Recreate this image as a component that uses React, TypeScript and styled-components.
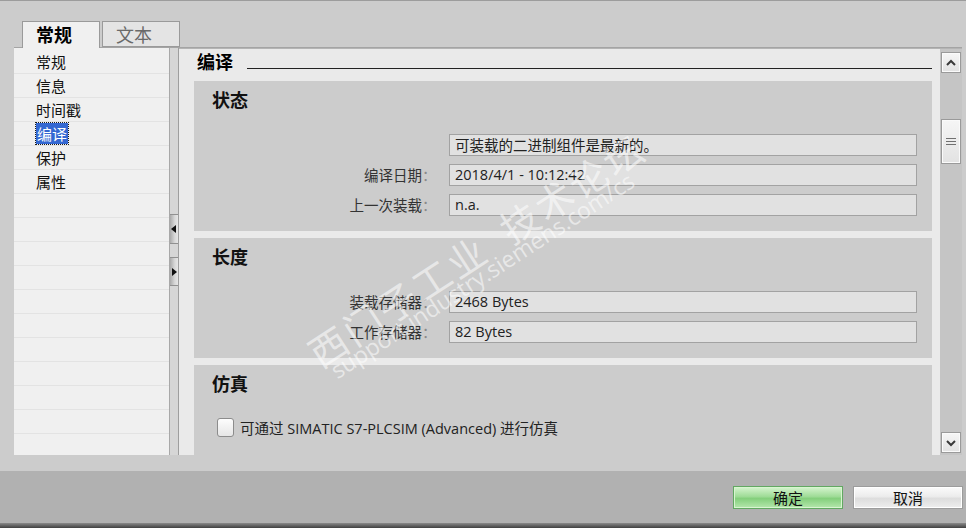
import React from "react";
import styled, { createGlobalStyle } from "styled-components";

const GlobalStyle = createGlobalStyle`
  html, body { margin: 0; padding: 0; background: #cccccc; }
  body { font-family: "Open Sans", "Noto Sans CJK SC", sans-serif; }
  * { box-sizing: border-box; }
`;

const CJK = `"Noto Sans CJK SC", "Open Sans", sans-serif`;
const LATIN = `"Open Sans", "Noto Sans CJK SC", sans-serif`;

const Root = styled.div`
  position: relative;
  width: 966px;
  height: 528px;
  overflow: hidden;
  background: #cccccc;
  border-top: 1px solid #9c9c9c;
  display: flex;
  flex-direction: column;
  font-family: ${LATIN};
`;

const TabRow = styled.div`
  display: flex;
  gap: 2px;
  padding: 20px 0 0 22px;
  height: 46px;
  flex: none;
`;

const Tab = styled.div<{ $active?: boolean }>`
  position: relative;
  z-index: 1;
  width: 78px;
  height: ${(p) => (p.$active ? "27px" : "26px")};
  margin-bottom: ${(p) => (p.$active ? "-1px" : "0")};
  border: 1px solid #9a9a9a;
  border-bottom: ${(p) => (p.$active ? "none" : "1px solid #9a9a9a")};
  background: ${(p) => (p.$active ? "#f0f0f0" : "#e4e4e4")};
  color: ${(p) => (p.$active ? "#000" : "#6a6a6a")};
  font-family: ${CJK};
  font-size: 18px;
  font-weight: ${(p) => (p.$active ? 700 : 400)};
  line-height: 25px;
  padding-left: 13px;
`;

const Body = styled.div`
  display: flex;
  height: 408px;
  margin: 0 4px 0 14px;
  border-top: 1px solid #a4a4a4;
  flex: none;
`;

const List = styled.div`
  width: 155px;
  background: #f0f0f0;
  padding-top: 2px;
  display: flex;
  flex-direction: column;
  overflow: hidden;
`;

const Row = styled.div`
  height: 24px;
  flex: none;
  border-bottom: 1px solid #e3e3e3;
  padding-left: 22px;
  display: flex;
  align-items: center;
  font-family: ${CJK};
  font-size: 15px;
  color: #111;
`;

const Selected = styled.span`
  background: #3468d2;
  color: #fff;
  outline: 1px dotted #1a1a1a;
  outline-offset: 0;
  padding: 0 1px;
  line-height: 21px;
`;

const Splitter = styled.div`
  width: 10px;
  background: #d6d6d6;
  border-left: 1px solid #a8a8a8;
  border-right: 1px solid #9e9e9e;
  display: flex;
  flex-direction: column;
  gap: 13px;
  padding-top: 166px;
`;

const SplitBtn = styled.div<{ $h: number }>`
  height: ${(p) => p.$h}px;
  background: linear-gradient(90deg, #a9a9a9, #d8d8d8 60%, #e6e6e6);
  border-top: 1px solid #909090;
  border-bottom: 1px solid #909090;
  display: flex;
  align-items: center;
  justify-content: center;
`;

const Content = styled.div`
  flex: 1;
  display: flex;
  background: #eaeaea;
  border-top: 1px solid #b4b4b4;
  min-width: 0;
  overflow: hidden;
`;

const ScrollArea = styled.div`
  flex: 1;
  padding: 0 8px 0 15px;
  display: flex;
  flex-direction: column;
  gap: 7px;
`;

const Header = styled.div`
  height: 25px;
  display: flex;
  align-items: flex-start;
  flex: none;
`;

const HeaderTitle = styled.div`
  font-family: ${CJK};
  font-size: 18px;
  font-weight: 700;
  line-height: 25px;
  padding-left: 3px;
  color: #000;
`;

const Rule = styled.div`
  flex: 1;
  height: 1px;
  background: #222;
  margin: 19px 0 0 14px;
`;

const Section = styled.div`
  background: #cccccc;
  padding: 7px 15px 15px 18px;
  flex: none;
`;

const SectionTitle = styled.div`
  font-family: ${CJK};
  font-size: 18px;
  font-weight: 700;
  line-height: 22px;
  color: #111;
`;

const Fields = styled.div`
  margin-top: 24px;
  display: grid;
  grid-template-columns: 1fr 468px;
  column-gap: 13px;
  row-gap: 8px;
`;

const Label = styled.div`
  text-align: right;
  font-family: ${CJK};
  font-size: 14.5px;
  line-height: 22px;
  color: #333;
  white-space: nowrap;
`;

const Colon = styled.span`
  display: inline-block;
  width: 14px;
  text-align: center;
  color: #8a8a8a;
`;

const Field = styled.div<{ $cjk?: boolean }>`
  height: 22px;
  border: 1px solid #a2a2a2;
  background: #e1e1e1;
  padding-left: 5px;
  font-family: ${(p) => (p.$cjk ? CJK : LATIN)};
  font-size: 14.5px;
  line-height: 20px;
  color: #222;
  white-space: nowrap;
`;

const CheckRow = styled.label`
  margin-top: 24px;
  margin-left: 5px;
  display: flex;
  align-items: center;
  gap: 6px;
  height: 19px;
  font-family: ${LATIN};
  font-size: 14.5px;
  color: #222;
`;

const CheckBox = styled.span`
  width: 17px;
  height: 19px;
  border: 1px solid #8c8c8c;
  border-radius: 3px;
  background: linear-gradient(#fdfdfd, #e6e6e6);
  flex: none;
`;

const Cjk = styled.span`
  font-family: ${CJK};
  font-size: 14.5px;
`;

const ScrollBar = styled.div`
  width: 22px;
  background: #c5c5c5;
  padding: 2px 1px;
  display: flex;
  flex-direction: column;
`;

const ScrollBtn = styled.div<{ $h: number }>`
  height: ${(p) => p.$h}px;
  flex: none;
  border: 1px solid #9a9a9a;
  box-shadow: inset 0 0 0 1px #fafafa;
  background: linear-gradient(#f6f6f6, #e2e2e2);
  display: flex;
  align-items: center;
  justify-content: center;
`;

const Thumb = styled(ScrollBtn)`
  margin-top: 46px;
`;

const Spacer = styled.div`
  flex: 1;
`;

const Footer = styled.div`
  margin-top: 16px;
  height: 52px;
  flex: none;
  background: #b1b1b1;
  display: flex;
  justify-content: flex-end;
  align-items: flex-start;
  gap: 10px;
  padding: 15px 3px 0 0;
`;

const Button = styled.div<{ $primary?: boolean }>`
  width: 110px;
  height: 23px;
  border: 1px solid ${(p) => (p.$primary ? "#62a862" : "#9c9c9c")};
  box-shadow: inset 0 0 0 1px ${(p) => (p.$primary ? "#d8f5d0" : "#ffffff")};
  background: ${(p) =>
    p.$primary
      ? "linear-gradient(#d6f4cf, #9fdc97 45%, #84cf7c 55%, #b5e7ad)"
      : "linear-gradient(#fbfbfb, #ececec 45%, #dddddd 55%, #eeeeee)"};
  font-family: ${CJK};
  font-size: 15px;
  line-height: 21px;
  text-align: center;
  color: #111;
`;

const BottomBar = styled.div`
  height: 5px;
  flex: none;
  background: linear-gradient(#8a8a8a, #404040);
`;

const Watermark = styled.div<{ $size: number }>`
  position: absolute;
  transform: translate(-50%, -50%) rotate(-33deg);
  white-space: nowrap;
  color: rgba(255, 255, 255, 0.55);
  font-size: ${(p) => p.$size}px;
  pointer-events: none;
  z-index: 5;
`;

const WmCjk = styled(Watermark)`
  font-family: ${CJK};
  letter-spacing: 3px;
`;

const WmUrl = styled(Watermark)`
  font-family: ${LATIN};
`;

const Tri = ({ dir }: { dir: "l" | "r" }) => (
  <svg width="6" height="8" viewBox="0 0 6 8">
    {dir === "l" ? <polygon points="5,0 5,8 0,4" fill="#111" /> : <polygon points="1,0 1,8 6,4" fill="#111" />}
  </svg>
);

const Chevron = ({ up }: { up?: boolean }) => (
  <svg width="12" height="8" viewBox="0 0 12 8">
    <polyline
      points={up ? "2,6 6,2 10,6" : "2,2 6,6 10,2"}
      fill="none"
      stroke="#3a3a3a"
      strokeWidth="2"
    />
  </svg>
);

const Grip = () => (
  <svg width="10" height="9" viewBox="0 0 10 9">
    <rect x="0" y="1" width="10" height="1" fill="#707070" />
    <rect x="0" y="4" width="10" height="1" fill="#707070" />
    <rect x="0" y="7" width="10" height="1" fill="#707070" />
  </svg>
);

const navItems = ["常规", "信息", "时间戳", "编译", "保护", "属性"];

export default function App() {
  const rows = Array.from({ length: 17 }, (_, i) => navItems[i] ?? "");
  return (
    <>
      <GlobalStyle />
      <Root>
        <TabRow>
          <Tab $active>常规</Tab>
          <Tab>文本</Tab>
        </TabRow>
        <Body>
          <List>
            {rows.map((t, i) => (
              <Row key={i}>{t === "编译" ? <Selected>{t}</Selected> : t}</Row>
            ))}
          </List>
          <Splitter>
            <SplitBtn $h={30}>
              <Tri dir="l" />
            </SplitBtn>
            <SplitBtn $h={29}>
              <Tri dir="r" />
            </SplitBtn>
          </Splitter>
          <Content>
            <ScrollArea>
              <Header>
                <HeaderTitle>编译</HeaderTitle>
                <Rule />
              </Header>
              <Section>
                <SectionTitle>状态</SectionTitle>
                <Fields>
                  <Label />
                  <Field $cjk>可装载的二进制组件是最新的。</Field>
                  <Label>
                    编译日期<Colon>：</Colon>
                  </Label>
                  <Field>2018/4/1 - 10:12:42</Field>
                  <Label>
                    上一次装载<Colon>：</Colon>
                  </Label>
                  <Field>n.a.</Field>
                </Fields>
              </Section>
              <Section>
                <SectionTitle>长度</SectionTitle>
                <Fields>
                  <Label>
                    装载存储器<Colon>：</Colon>
                  </Label>
                  <Field>2468 Bytes</Field>
                  <Label>
                    工作存储器<Colon>：</Colon>
                  </Label>
                  <Field>82 Bytes</Field>
                </Fields>
              </Section>
              <Section>
                <SectionTitle>仿真</SectionTitle>
                <CheckRow>
                  <CheckBox />
                  <span>
                    <Cjk>可通过</Cjk> SIMATIC S7-PLCSIM (Advanced) <Cjk>进行仿真</Cjk>
                  </span>
                </CheckRow>
                <div style={{ height: 40 }} />
              </Section>
            </ScrollArea>
            <ScrollBar>
              <ScrollBtn $h={21} style={{ marginTop: 1 }}>
                <Chevron up />
              </ScrollBtn>
              <Thumb $h={45}>
                <Grip />
              </Thumb>
              <Spacer />
              <ScrollBtn $h={21}>
                <Chevron />
              </ScrollBtn>
            </ScrollBar>
          </Content>
        </Body>
        <Footer>
          <Button $primary>确定</Button>
          <Button>取消</Button>
        </Footer>
        <BottomBar />
        <WmCjk $size={38} style={{ left: 476, top: 248 }}>
          西门子工业&nbsp;&nbsp;技术论坛
        </WmCjk>
        <WmUrl $size={23} style={{ left: 482, top: 274 }}>
          support.industry.siemens.com/cs
        </WmUrl>
      </Root>
    </>
  );
}
